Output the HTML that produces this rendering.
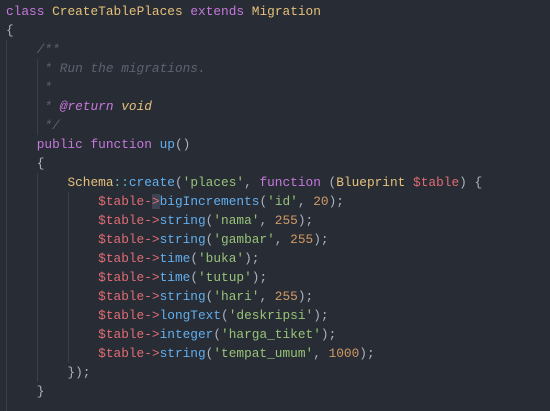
<!DOCTYPE html>
<html><head><style>
html,body{margin:0;padding:0;background:#282c34;width:550px;height:411px;overflow:hidden}
pre{margin:0;position:absolute;left:6px;top:2px;font-family:"Liberation Mono",monospace;font-size:12.8px;line-height:19px;color:#abb2bf}
.k{color:#c678dd}.c{color:#e5c07b}.m{color:#5c6370;font-style:italic}.mk{color:#c678dd;font-style:italic}.mc{color:#e5c07b;font-style:italic}
.f{color:#61afef}.v{color:#e06c75}.s{color:#98c379}.n{color:#d19a66}.o{color:#56b6c2}
.g{position:absolute;width:1px;background:#3b4048}
.cur{background:#3e4451}
</style></head><body>
<div class="g" style="left:6px;top:40px;height:371px"></div>
<div class="g" style="left:37px;top:59px;height:76px"></div>
<div class="g" style="left:37px;top:173px;height:209px"></div>
<div class="g" style="left:68px;top:192px;height:171px"></div>
<pre><span class="k">class</span> <span class="c">CreateTablePlaces</span> <span class="k">extends</span> <span class="c">Migration</span>
{
    <span class="m">/**</span>
<span class="m">     * Run the migrations.</span>
<span class="m">     *</span>
<span class="m">     * </span><span class="mk">@return</span> <span class="mc">void</span>
<span class="m">     */</span>
    <span class="k">public</span> <span class="k">function</span> <span class="f">up</span>()
    {
        <span class="c">Schema</span><span class="o">::</span><span class="f">create</span>(<span class="s">'places'</span>, <span class="k">function</span> (<span class="c">Blueprint</span> <span class="v">$table</span>) {
            <span class="v">$table-<span class="cur">&gt;</span></span><span class="f">bigIncrements</span>(<span class="s">'id'</span>, <span class="n">20</span>);
            <span class="v">$table-&gt;</span><span class="f">string</span>(<span class="s">'nama'</span>, <span class="n">255</span>);
            <span class="v">$table-&gt;</span><span class="f">string</span>(<span class="s">'gambar'</span>, <span class="n">255</span>);
            <span class="v">$table-&gt;</span><span class="f">time</span>(<span class="s">'buka'</span>);
            <span class="v">$table-&gt;</span><span class="f">time</span>(<span class="s">'tutup'</span>);
            <span class="v">$table-&gt;</span><span class="f">string</span>(<span class="s">'hari'</span>, <span class="n">255</span>);
            <span class="v">$table-&gt;</span><span class="f">longText</span>(<span class="s">'deskripsi'</span>);
            <span class="v">$table-&gt;</span><span class="f">integer</span>(<span class="s">'harga_tiket'</span>);
            <span class="v">$table-&gt;</span><span class="f">string</span>(<span class="s">'tempat_umum'</span>, <span class="n">1000</span>);
        });
    }
</pre>
</body></html>
